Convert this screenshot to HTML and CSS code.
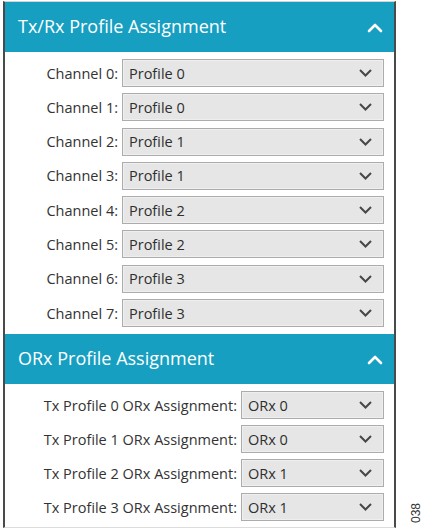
FILE: index.html
```html
<!DOCTYPE html>
<html lang="en">
<head>
    <meta charset="UTF-8">
    <meta name="viewport" content="width=device-width, initial-scale=1.0">
    <title>Profile Assignment</title>
    <link rel="stylesheet" href="styles.css">
</head>
<body>
    <div class="panel">
        <div class="section-header">
            <span>Tx/Rx Profile Assignment</span>
            <svg class="collapse-icon" width="16" height="10" viewBox="0 0 16 10" fill="none" stroke="currentColor" stroke-width="2.6" stroke-linecap="round" stroke-linejoin="round">
                <polyline points="2,8 8,2 14,8"></polyline>
            </svg>
        </div>
        <div class="rows channel-rows">
            <label class="row-label">Channel 0:</label>
            <div class="dropdown"><span>Profile 0</span><svg width="13" height="8" viewBox="0 0 13 8" fill="none" stroke="currentColor" stroke-width="2"><polyline points="1,1 6.5,6.5 12,1"></polyline></svg></div>
            <label class="row-label">Channel 1:</label>
            <div class="dropdown"><span>Profile 0</span><svg width="13" height="8" viewBox="0 0 13 8" fill="none" stroke="currentColor" stroke-width="2"><polyline points="1,1 6.5,6.5 12,1"></polyline></svg></div>
            <label class="row-label">Channel 2:</label>
            <div class="dropdown"><span>Profile 1</span><svg width="13" height="8" viewBox="0 0 13 8" fill="none" stroke="currentColor" stroke-width="2"><polyline points="1,1 6.5,6.5 12,1"></polyline></svg></div>
            <label class="row-label">Channel 3:</label>
            <div class="dropdown"><span>Profile 1</span><svg width="13" height="8" viewBox="0 0 13 8" fill="none" stroke="currentColor" stroke-width="2"><polyline points="1,1 6.5,6.5 12,1"></polyline></svg></div>
            <label class="row-label">Channel 4:</label>
            <div class="dropdown"><span>Profile 2</span><svg width="13" height="8" viewBox="0 0 13 8" fill="none" stroke="currentColor" stroke-width="2"><polyline points="1,1 6.5,6.5 12,1"></polyline></svg></div>
            <label class="row-label">Channel 5:</label>
            <div class="dropdown"><span>Profile 2</span><svg width="13" height="8" viewBox="0 0 13 8" fill="none" stroke="currentColor" stroke-width="2"><polyline points="1,1 6.5,6.5 12,1"></polyline></svg></div>
            <label class="row-label">Channel 6:</label>
            <div class="dropdown"><span>Profile 3</span><svg width="13" height="8" viewBox="0 0 13 8" fill="none" stroke="currentColor" stroke-width="2"><polyline points="1,1 6.5,6.5 12,1"></polyline></svg></div>
            <label class="row-label">Channel 7:</label>
            <div class="dropdown"><span>Profile 3</span><svg width="13" height="8" viewBox="0 0 13 8" fill="none" stroke="currentColor" stroke-width="2"><polyline points="1,1 6.5,6.5 12,1"></polyline></svg></div>
        </div>
        <div class="section-header">
            <span>ORx Profile Assignment</span>
            <svg class="collapse-icon" width="16" height="10" viewBox="0 0 16 10" fill="none" stroke="currentColor" stroke-width="2.6" stroke-linecap="round" stroke-linejoin="round">
                <polyline points="2,8 8,2 14,8"></polyline>
            </svg>
        </div>
        <div class="rows orx-rows">
            <label class="row-label">Tx Profile 0 ORx Assignment:</label>
            <div class="dropdown"><span>ORx 0</span><svg width="13" height="8" viewBox="0 0 13 8" fill="none" stroke="currentColor" stroke-width="2"><polyline points="1,1 6.5,6.5 12,1"></polyline></svg></div>
            <label class="row-label">Tx Profile 1 ORx Assignment:</label>
            <div class="dropdown"><span>ORx 0</span><svg width="13" height="8" viewBox="0 0 13 8" fill="none" stroke="currentColor" stroke-width="2"><polyline points="1,1 6.5,6.5 12,1"></polyline></svg></div>
            <label class="row-label">Tx Profile 2 ORx Assignment:</label>
            <div class="dropdown"><span>ORx 1</span><svg width="13" height="8" viewBox="0 0 13 8" fill="none" stroke="currentColor" stroke-width="2"><polyline points="1,1 6.5,6.5 12,1"></polyline></svg></div>
            <label class="row-label">Tx Profile 3 ORx Assignment:</label>
            <div class="dropdown"><span>ORx 1</span><svg width="13" height="8" viewBox="0 0 13 8" fill="none" stroke="currentColor" stroke-width="2"><polyline points="1,1 6.5,6.5 12,1"></polyline></svg></div>
        </div>
    </div>
    <div class="figure-side">
        <span class="figure-number">038</span>
    </div>
</body>
</html>
```

FILE: styles.css
```css
body {
    font-family: "Open Sans", Arial, sans-serif;
    display: flex;
    align-items: flex-start;
    margin: 0;
    padding: 1px 0 0 3px;
    height: 529px;
    box-sizing: border-box;
    background-color: #fff;
}

.panel {
    width: 393px;
    box-sizing: border-box;
    border-left: 2px solid #4a4a4a;
    border-right: 2px solid #4a4a4a;
    border-top: 1px solid #d4d4d4;
    border-bottom: 1px solid #dcdcdc;
}

.section-header {
    display: flex;
    align-items: center;
    justify-content: space-between;
    height: 50px;
    padding: 0 11px 0 13px;
    background-color: #169fc1;
    color: #fff;
    font-size: 18px;
}

.section-header span {
    margin-top: -2px;
}

.collapse-icon {
    color: #fff;
    margin-top: 2px;
}

.rows {
    display: grid;
    column-gap: 4px;
    align-items: center;
    padding-right: 10px;
}

.channel-rows {
    grid-template-columns: 1fr 262px;
    row-gap: 6.3px;
    padding-top: 7px;
    padding-bottom: 7px;
}

.orx-rows {
    grid-template-columns: 1fr 143px;
    row-gap: 6px;
    padding-top: 7px;
    padding-bottom: 6px;
}

.row-label {
    text-align: right;
    font-size: 14.5px;
    color: #333;
}

.dropdown {
    display: flex;
    align-items: center;
    justify-content: space-between;
    height: 28px;
    box-sizing: border-box;
    padding: 0 11px 0 6px;
    background-color: #e6e6e6;
    border: 1px solid #acacac;
    box-shadow: inset 0 0 0 1px #efefef;
    color: #2e2e2e;
    font-size: 14.5px;
}

.dropdown svg {
    color: #474747;
}

.figure-side {
    flex: 1;
    align-self: stretch;
    display: flex;
    justify-content: center;
    align-items: flex-end;
    padding-bottom: 6px;
}

.figure-number {
    writing-mode: vertical-rl;
    transform: rotate(180deg);
    font-family: Arial, "Liberation Sans", sans-serif;
    font-size: 12px;
    color: #333;
    margin-left: 1px;
}
```
